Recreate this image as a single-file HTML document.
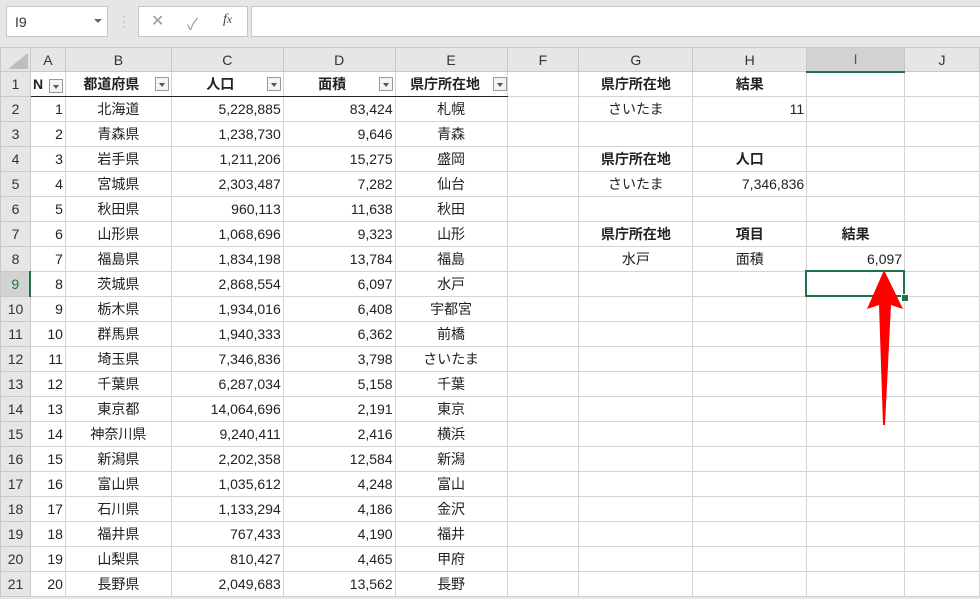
<!DOCTYPE html>
<html><head><meta charset="utf-8"><style>
body{margin:0;width:980px;height:599px;overflow:hidden;background:#e6e6e6;font-family:"Liberation Sans","Noto Sans CJK JP",sans-serif;position:relative}
.box{position:absolute;background:#fff;border:1px solid #c6c6c6}
table{position:absolute;left:0;top:47px;border-collapse:collapse;table-layout:fixed;font-size:14px;color:#222}
td{border:1px solid #d4d4d4;height:25px;padding:0 2px;white-space:nowrap;overflow:hidden;background:#fff;box-sizing:border-box}
tr.h td{background:#e6e6e6;text-align:center;color:#333;border-color:#c8c8c8;height:24px;font-size:14px}
td.rh{background:#e6e6e6;text-align:center;color:#333;border-color:#c8c8c8}
.r{text-align:right}.c{text-align:center}.b{font-weight:bold}
tr.t1 td.tb{border-bottom:1.5px solid #222}
.fb{display:inline-block;width:14px;height:14px;border:1px solid #999;background:#f4f4f4;vertical-align:middle;position:relative;float:right;margin-top:3px;box-sizing:border-box}
.fb:after{content:"";position:absolute;left:3px;top:5px;border-left:3.5px solid transparent;border-right:3.5px solid transparent;border-top:4px solid #555}
</style></head><body>
<div class="box" style="left:6px;top:6px;width:100px;height:29px;font-size:14px;color:#333"><span style="position:absolute;left:8px;top:7px">I9</span><span style="position:absolute;right:5px;top:12px;border-left:4px solid transparent;border-right:4px solid transparent;border-top:4px solid #666"></span></div>
<div style="position:absolute;left:122px;top:14px;color:#aaa;font-size:12px;line-height:5px">·<br>·<br>·</div>
<div class="box" style="left:138px;top:6px;width:108px;height:29px;color:#999;font-size:16px"><span style="position:absolute;left:12px;top:4px">✕</span><span style="position:absolute;left:48px;top:4px">✓</span><span style="position:absolute;left:84px;top:5px;font-family:'Liberation Serif',serif;font-style:italic;color:#444;font-size:14px">f<small>x</small></span></div>
<div class="box" style="left:251px;top:6px;width:740px;height:29px"></div>
<div style="position:absolute;left:8px;top:53px;width:0;height:0;border-left:20px solid transparent;border-bottom:16px solid #bdbdbd;z-index:2"></div>
<table>
<colgroup><col style="width:30px"><col style="width:35px"><col style="width:106px"><col style="width:112px"><col style="width:112px"><col style="width:112px"><col style="width:72px"><col style="width:114px"><col style="width:114px"><col style="width:98px"><col style="width:75px"></colgroup>
<tr class="h"><td></td><td>A</td><td>B</td><td>C</td><td>D</td><td>E</td><td>F</td><td>G</td><td>H</td><td style="background:#d2d2d2;border-bottom:2px solid #217346;color:#217346">I</td><td>J</td></tr>
<tr class="t1"><td class="rh">1</td><td class="tb b">N<span class="fb"></span></td><td class="tb b c">都道府県<span class="fb"></span></td><td class="tb b c">人口<span class="fb"></span></td><td class="tb b c">面積<span class="fb"></span></td><td class="tb b c" style="padding-right:0">県庁所在地<span class="fb"></span></td><td></td><td class="b c">県庁所在地</td><td class="b c">結果</td><td></td><td></td></tr>
<tr><td class="rh">2</td><td class="r">1</td><td class="c">北海道</td><td class="r">5,228,885</td><td class="r">83,424</td><td class="c">札幌</td><td></td><td class="c">さいたま</td><td class="r">11</td><td></td><td></td></tr>
<tr><td class="rh">3</td><td class="r">2</td><td class="c">青森県</td><td class="r">1,238,730</td><td class="r">9,646</td><td class="c">青森</td><td></td><td></td><td></td><td></td><td></td></tr>
<tr><td class="rh">4</td><td class="r">3</td><td class="c">岩手県</td><td class="r">1,211,206</td><td class="r">15,275</td><td class="c">盛岡</td><td></td><td class="b c">県庁所在地</td><td class="b c">人口</td><td></td><td></td></tr>
<tr><td class="rh">5</td><td class="r">4</td><td class="c">宮城県</td><td class="r">2,303,487</td><td class="r">7,282</td><td class="c">仙台</td><td></td><td class="c">さいたま</td><td class="r">7,346,836</td><td></td><td></td></tr>
<tr><td class="rh">6</td><td class="r">5</td><td class="c">秋田県</td><td class="r">960,113</td><td class="r">11,638</td><td class="c">秋田</td><td></td><td></td><td></td><td></td><td></td></tr>
<tr><td class="rh">7</td><td class="r">6</td><td class="c">山形県</td><td class="r">1,068,696</td><td class="r">9,323</td><td class="c">山形</td><td></td><td class="b c">県庁所在地</td><td class="b c">項目</td><td class="b c">結果</td><td></td></tr>
<tr><td class="rh">8</td><td class="r">7</td><td class="c">福島県</td><td class="r">1,834,198</td><td class="r">13,784</td><td class="c">福島</td><td></td><td class="c">水戸</td><td class="c">面積</td><td class="r">6,097</td><td></td></tr>
<tr><td class="rh" style="background:#d2d2d2;color:#217346;border-right:2px solid #217346">9</td><td class="r">8</td><td class="c">茨城県</td><td class="r">2,868,554</td><td class="r">6,097</td><td class="c">水戸</td><td></td><td></td><td></td><td></td><td></td></tr>
<tr><td class="rh">10</td><td class="r">9</td><td class="c">栃木県</td><td class="r">1,934,016</td><td class="r">6,408</td><td class="c">宇都宮</td><td></td><td></td><td></td><td></td><td></td></tr>
<tr><td class="rh">11</td><td class="r">10</td><td class="c">群馬県</td><td class="r">1,940,333</td><td class="r">6,362</td><td class="c">前橋</td><td></td><td></td><td></td><td></td><td></td></tr>
<tr><td class="rh">12</td><td class="r">11</td><td class="c">埼玉県</td><td class="r">7,346,836</td><td class="r">3,798</td><td class="c">さいたま</td><td></td><td></td><td></td><td></td><td></td></tr>
<tr><td class="rh">13</td><td class="r">12</td><td class="c">千葉県</td><td class="r">6,287,034</td><td class="r">5,158</td><td class="c">千葉</td><td></td><td></td><td></td><td></td><td></td></tr>
<tr><td class="rh">14</td><td class="r">13</td><td class="c">東京都</td><td class="r">14,064,696</td><td class="r">2,191</td><td class="c">東京</td><td></td><td></td><td></td><td></td><td></td></tr>
<tr><td class="rh">15</td><td class="r">14</td><td class="c">神奈川県</td><td class="r">9,240,411</td><td class="r">2,416</td><td class="c">横浜</td><td></td><td></td><td></td><td></td><td></td></tr>
<tr><td class="rh">16</td><td class="r">15</td><td class="c">新潟県</td><td class="r">2,202,358</td><td class="r">12,584</td><td class="c">新潟</td><td></td><td></td><td></td><td></td><td></td></tr>
<tr><td class="rh">17</td><td class="r">16</td><td class="c">富山県</td><td class="r">1,035,612</td><td class="r">4,248</td><td class="c">富山</td><td></td><td></td><td></td><td></td><td></td></tr>
<tr><td class="rh">18</td><td class="r">17</td><td class="c">石川県</td><td class="r">1,133,294</td><td class="r">4,186</td><td class="c">金沢</td><td></td><td></td><td></td><td></td><td></td></tr>
<tr><td class="rh">19</td><td class="r">18</td><td class="c">福井県</td><td class="r">767,433</td><td class="r">4,190</td><td class="c">福井</td><td></td><td></td><td></td><td></td><td></td></tr>
<tr><td class="rh">20</td><td class="r">19</td><td class="c">山梨県</td><td class="r">810,427</td><td class="r">4,465</td><td class="c">甲府</td><td></td><td></td><td></td><td></td><td></td></tr>
<tr><td class="rh">21</td><td class="r">20</td><td class="c">長野県</td><td class="r">2,049,683</td><td class="r">13,562</td><td class="c">長野</td><td></td><td></td><td></td><td></td><td></td></tr>
</table>
<div style="position:absolute;left:805px;top:270px;width:100px;height:27px;border:2px solid #217346;box-sizing:border-box"></div>
<div style="position:absolute;left:901px;top:294px;width:6px;height:6px;background:#217346;border:1px solid #fff"></div>
<svg style="position:absolute;left:0;top:0" width="980" height="599"><path d="M884 270 L903 309 L891 305 L885 425 L883 425 L879 305 L867 309 Z" fill="#ff0000"/></svg>
</body></html>
